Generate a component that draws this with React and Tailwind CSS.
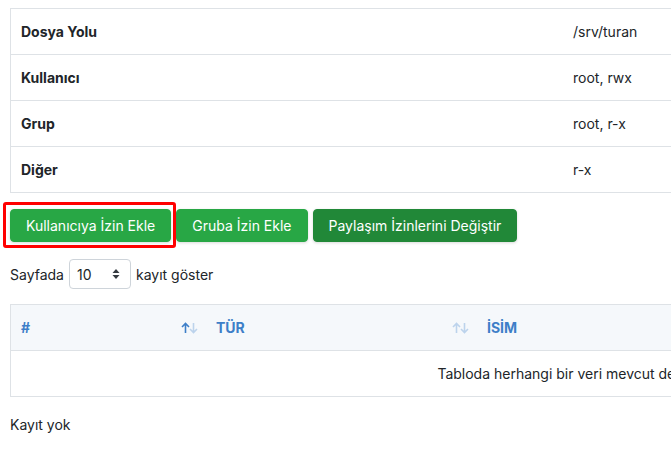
import React from "react";

const details = [
  { label: "Dosya Yolu", value: "/srv/turan" },
  { label: "Kullanıcı", value: "root, rwx" },
  { label: "Grup", value: "root, r-x" },
  { label: "Diğer", value: "r-x" },
];

const SortIcon = ({ active }) => (
  <svg width="17" height="12" viewBox="0 0 17 12" fill="none">
    <path
      d="M4.5 11V1.5M1 5l3.5-3.5L8 5"
      stroke={active ? "#3d7fc8" : "#bcd3ec"}
      strokeWidth="1.6"
    />
    <path
      d="M12.5 1v9.5M9 7l3.5 3.5L16 7"
      stroke="#bcd3ec"
      strokeWidth="1.6"
    />
  </svg>
);

const App = () => {
  return (
    <div
      className="relative w-[671px] h-[454px] overflow-hidden bg-white text-[14px] text-[#212529]"
      style={{ fontFamily: "Inter, 'Noto Sans', sans-serif" }}
    >
      <div className="pl-[10px] pt-[8px]">
        {/* izin detaylari */}
        <div className="w-[1108px] border border-[#dee2e6]">
          {details.map((row, i) => (
            <div
              key={row.label}
              className={
                "flex items-center " +
                (i < details.length - 1
                  ? "h-[46px] border-b border-[#dee2e6]"
                  : "h-[45px]")
              }
            >
              <div className="w-[552px] px-[10px] font-bold">{row.label}</div>
              <div className="px-[10px]">{row.value}</div>
            </div>
          ))}
        </div>

        <div className="mt-[16px] flex gap-[5px]">
          <button className="h-[33px] px-[15px] rounded-[4px] border border-[#28a745] bg-[#28a745] text-white shadow-[0_1px_3px_rgba(0,0,0,0.15)]">
            Kullanıcıya İzin Ekle
          </button>
          <button className="h-[33px] px-[15px] rounded-[4px] border border-[#28a745] bg-[#28a745] text-white shadow-[0_1px_3px_rgba(0,0,0,0.15)]">
            Gruba İzin Ekle
          </button>
          <button className="h-[33px] px-[15px] rounded-[4px] border border-[#218838] bg-[#218838] text-white shadow-[0_1px_3px_rgba(0,0,0,0.15)]">
            Paylaşım İzinlerini Değiştir
          </button>
        </div>

        <div className="mt-[17px] flex items-center gap-[5px]">
          <span>Sayfada</span>
          <div className="flex items-center justify-between w-[62px] h-[30px] pl-[7px] pr-[10px] border border-[#ced4da] rounded-[4px]">
            <span>10</span>
            <svg width="8" height="12" viewBox="0 0 8 12">
              <path d="M4 1L7.5 5H0.5z M4 11L0.5 7H7.5z" fill="#343a40" />
            </svg>
          </div>
          <span>kayıt göster</span>
        </div>

        {/* kayit tablosu */}
        <div className="mt-[15px] w-[1108px] border border-[#dee2e6]">
          <div className="flex items-center h-[46px] bg-[#f5f8fb] border-b border-[#dee2e6] font-bold text-[#3d7fc8]">
            <div className="w-[195px] flex items-center justify-between pl-[10px] pr-[8px]">
              <span>#</span>
              <SortIcon active />
            </div>
            <div className="w-[271px] flex items-center justify-between pl-[10px] pr-[8px]">
              <span>TÜR</span>
              <SortIcon />
            </div>
            <div className="px-[10px]">İSİM</div>
          </div>
          <div className="flex items-center justify-center h-[45px]">
            Tabloda herhangi bir veri mevcut değil
          </div>
        </div>

        <div className="mt-[17px]">Kayıt yok</div>
      </div>

      {/* isaretleme kutusu */}
      <div className="absolute left-[3px] top-[202px] w-[173px] h-[46px] border-[3px] border-[#ff0000] rounded-[3px] pointer-events-none" />
    </div>
  );
};

export default App;
